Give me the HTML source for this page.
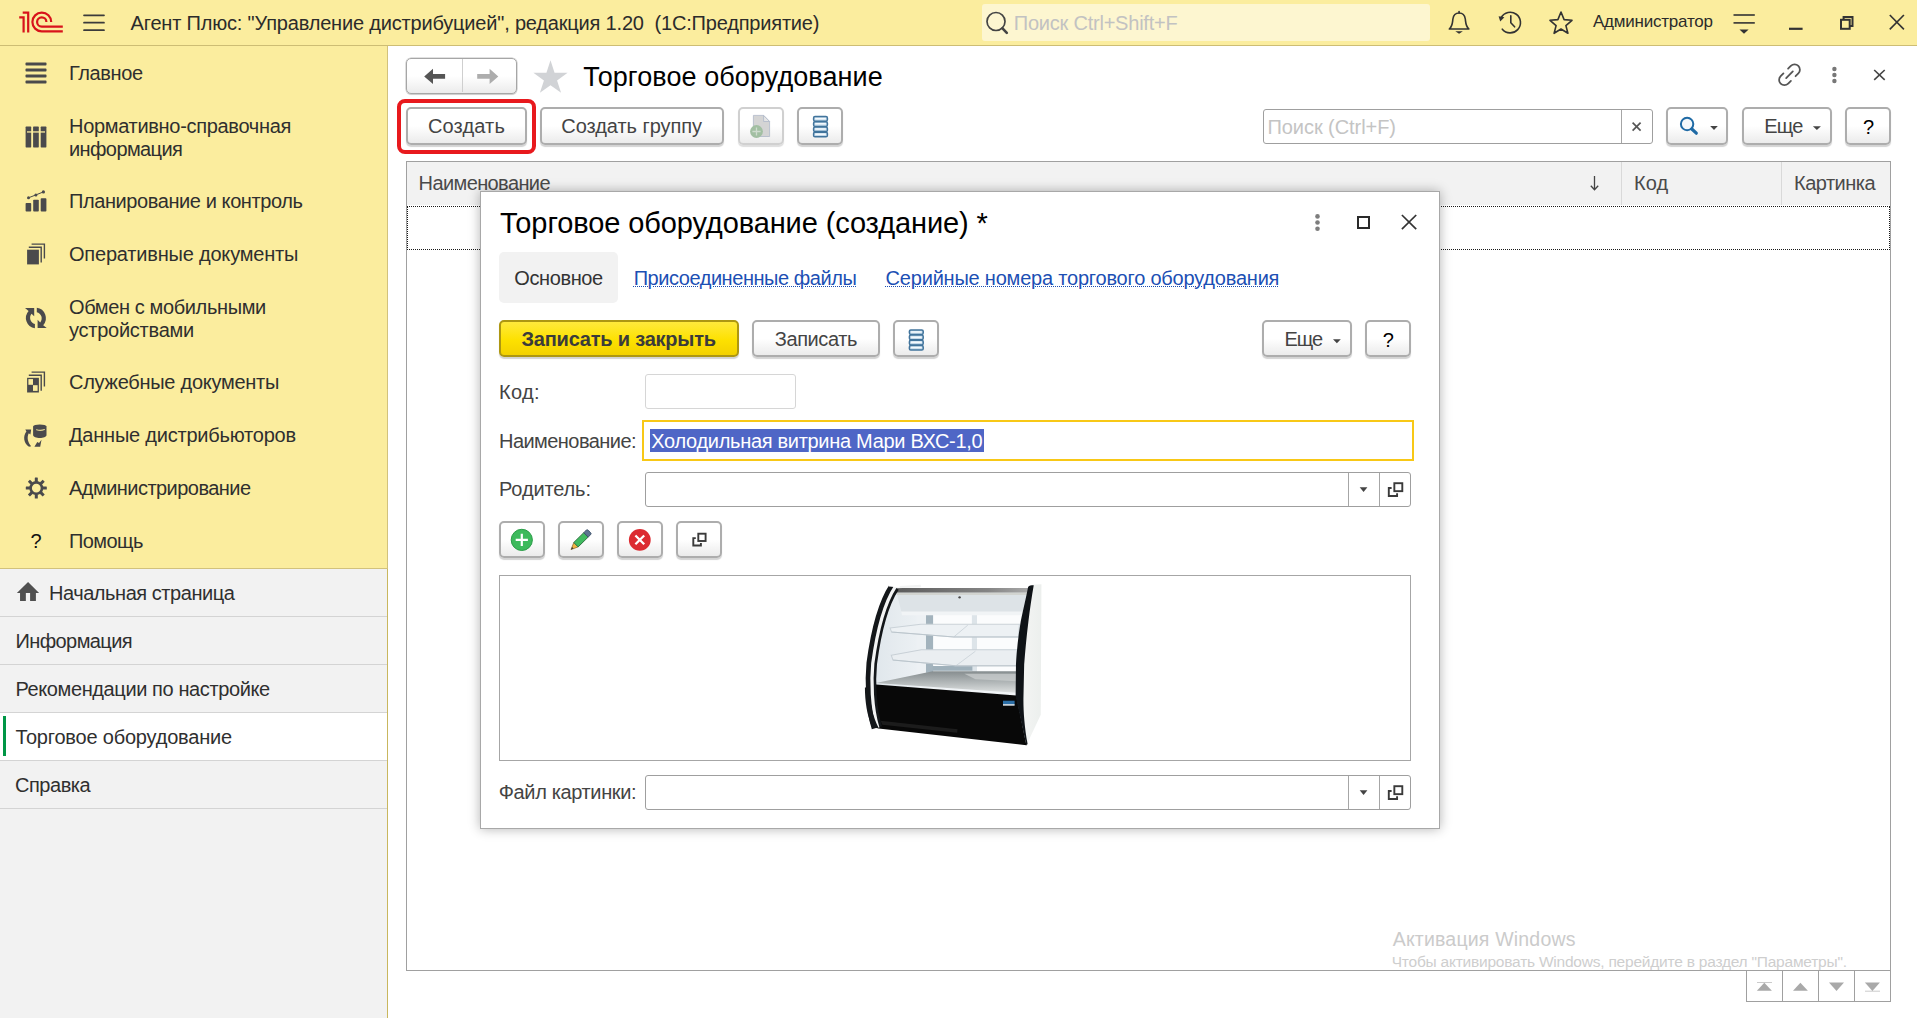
<!DOCTYPE html>
<html lang="ru">
<head>
<meta charset="utf-8">
<title>Торговое оборудование</title>
<style>
*{box-sizing:border-box;margin:0;padding:0}
html,body{width:1917px;height:1018px;overflow:hidden;background:#fff;font-family:"Liberation Sans",sans-serif;color:#333}
.abs{position:absolute}
svg{position:absolute;overflow:visible}
.t{position:absolute;white-space:pre;line-height:1}
.lnk{text-decoration:underline dotted;text-underline-offset:1px;text-decoration-thickness:1px}
.btn{position:absolute;border:2px solid #adadad;border-radius:5px;background:linear-gradient(#fff,#fff 50%,#ebebeb);box-shadow:0 2px 1px 0 #d3d3d3}
.btn.dis{border-color:#d0d0d0;box-shadow:0 2px 1px 0 #dedede}
.inp{position:absolute;border:1px solid #9f9f9f;border-radius:3px;background:#fff}
.vl{position:absolute;width:1px;background:#a6a6a6}
.oi{position:absolute;left:0;width:387px;height:48px;border-bottom:1px solid #d4d4d4}
</style>
</head>
<body>

<div class="abs" style="left:0;top:0;width:1917px;height:45px;background:#fbed9e"></div>
<div class="abs" style="left:0;top:45px;width:1917px;height:1px;background:#cdbd74"></div>
<svg style="left:0;top:0" width="120" height="46" viewBox="0 0 120 46">
 <g fill="none" stroke="#d8131b" stroke-width="2.2">
  <path d="M19.2 17.3 H23.6 V32.5"/>
  <path d="M22.7 12.6 H28.2 V32.5"/>
  <path d="M51.2 21.9 A9.4 9.4 0 1 0 41.75 31.4 H62.8"/>
  <path d="M46.4 21.9 A4.65 4.65 0 1 0 41.75 26.65 H62.8"/>
 </g>
 <g stroke="#3b3b3b" stroke-width="1.7" stroke-linecap="round">
  <path d="M84 15.3 H104"/><path d="M84 22.7 H104"/><path d="M84 30.2 H104"/>
 </g>
</svg>
<div class="abs" style="left:982px;top:4px;width:448px;height:37px;background:#fdf6d0;border-radius:3px"></div>
<svg style="left:980px;top:0" width="40" height="46" viewBox="980 0 40 46">
 <circle cx="996" cy="21.5" r="9" fill="none" stroke="#444" stroke-width="1.7"/>
 <path d="M1002.5 28.3 L1006.8 32.8" stroke="#444" stroke-width="2.6" stroke-linecap="round"/>
</svg>
<svg style="left:1440px;top:0" width="477" height="46" viewBox="1440 0 477 46">
 <g fill="none" stroke="#333" stroke-width="1.6" stroke-linejoin="round" stroke-linecap="round">
  <!-- bell -->
  <path d="M1449.3 29 H1468.9 C1465.5 26 1465.8 22.5 1465.3 19 C1464.8 15.3 1462.5 13 1459.1 13 C1455.7 13 1453.4 15.3 1452.9 19 C1452.4 22.5 1452.7 26 1449.3 29 Z"/>
  <path d="M1459.1 13 V11.6"/>
  <!-- history -->
  <path d="M1501.2 17.5 A10.3 10.3 0 1 1 1502.3 29.2"/>
  <path d="M1510.8 15.8 V22.8 L1514.6 26.8"/>
  <!-- star -->
  <path d="M1561 12 L1564.1 19.6 L1572 20.3 L1565.9 25.6 L1567.9 33.3 L1561 29 L1554.1 33.3 L1556.1 25.6 L1550 20.3 L1557.9 19.6 Z"/>
 </g>
 <path d="M1455.3 31.3 H1462.9 L1459.1 33.8 Z" fill="#333"/>
 <path d="M1498.6 16.2 L1504.4 17.2 L1500.2 21.6 Z" fill="#333"/>
 <g stroke="#333" stroke-width="1.6"><path d="M1733.5 15 H1754.8"/><path d="M1733.5 22.9 H1754.8"/></g>
 <path d="M1739.5 29.4 H1748.6 L1744 33.8 Z" fill="#333"/>
 <path d="M1789 28.8 H1802.6" stroke="#333" stroke-width="2.2"/>
 <g fill="none" stroke="#333" stroke-width="2">
  <rect x="1841" y="19.8" width="8.7" height="9"/>
  <path d="M1843.6 19.8 V17 H1852.5 V26 H1849.7"/>
 </g>
 <g stroke="#333" stroke-width="1.6"><path d="M1889.8 15 L1903.9 29.4"/><path d="M1903.9 15 L1889.8 29.4"/></g>
</svg>

<div class="abs" style="left:0;top:46px;width:387px;height:972px;background:#fbed9e"></div>
<div class="abs" style="left:387px;top:46px;width:1px;height:972px;background:#d2c27c"></div>
<div class="abs" style="left:0;top:568px;width:387px;height:450px;background:#f2f2f2"></div>
<div class="abs" style="left:0;top:568px;width:387px;height:1px;background:#d2c27c"></div>
<div class="abs" style="left:387px;top:569px;width:1px;height:449px;background:#c9b75e"></div>
<div class="oi" style="top:569px"></div>
<div class="oi" style="top:617px"></div>
<div class="oi" style="top:665px"></div>
<div class="oi" style="top:713px;background:#fff"></div>
<div class="abs" style="left:3px;top:716px;width:3px;height:40px;background:#009646"></div>
<div class="oi" style="top:761px"></div>
<svg style="left:0;top:46px" width="386" height="972" viewBox="0 46 386 972">
 <g fill="#4a4a4c">
  <!-- menu -->
  <rect x="25.5" y="62.6" width="21" height="2.9" rx=".8"/><rect x="25.5" y="68.6" width="21" height="2.9" rx=".8"/><rect x="25.5" y="74.6" width="21" height="2.9" rx=".8"/><rect x="25.5" y="80.6" width="21" height="2.9" rx=".8"/>
  <!-- books -->
  <rect x="25.6" y="126.6" width="5.6" height="20.8" rx=".6"/><rect x="33.1" y="126.6" width="5.7" height="20.8" rx=".6"/><rect x="40.7" y="126.6" width="5.7" height="20.8" rx=".6"/>
  <rect x="27" y="131.3" width="18" height="1.3" fill="#fbed9e"/>
  <!-- chart -->
  <rect x="25.6" y="203" width="5.6" height="8.5" rx=".8"/><rect x="33.2" y="199.8" width="5.6" height="11.7" rx=".8"/><rect x="40.7" y="198.3" width="5.7" height="13.2" rx=".8"/>
  <circle cx="28.5" cy="197.8" r="1.5"/><circle cx="35.9" cy="194.9" r="1.5"/><circle cx="43.4" cy="191.9" r="1.6"/>
  <path d="M28.5 197.8 L35.9 194.9 L43.4 191.9" stroke="#4a4a4c" stroke-width="1" fill="none"/>
  <!-- docs -->
  <rect x="27.1" y="249.7" width="11.8" height="14.7"/>
  <path d="M28.8 247.2 H41.2 V262.6 M31.6 244.1 H44.4 V258.4" fill="none" stroke="#4a4a4c" stroke-width="1.4"/>
  <!-- exchange -->
  <path d="M25 308 H34.2 V316.3 L31.6 313.7 A6.3 6.3 0 0 0 34.9 323.9 V328.3 A10.5 10.5 0 0 1 28.6 310.9 Z"/>
  <path d="M46.7 328.1 H37.6 V319.8 L40.2 322.4 A6.3 6.3 0 0 0 36.8 312.2 V307.8 A10.5 10.5 0 0 1 43.2 325.2 Z"/>
  <!-- service docs -->
  <rect x="27.1" y="377.8" width="11.8" height="14.7"/>
  <rect x="28.4" y="379.1" width="4.6" height="5.7" fill="#fbed9e"/><rect x="33" y="385.2" width="4.6" height="5.7" fill="#fbed9e"/>
  <path d="M28.8 375.3 H41.2 V390.8 M31.6 372.1 H44.4 V386.4" fill="none" stroke="#4a4a4c" stroke-width="1.4"/>
  <!-- distributors -->
  <ellipse cx="39.8" cy="426.6" rx="6.7" ry="2.1"/>
  <path d="M33.1 426.6 H46.5 V435 C46.5 438.9 33.1 438.9 33.1 435 Z"/>
  <path d="M36.6 429.7 C39 430.5 42 430.5 44.4 429.5" fill="none" stroke="#fbed9e" stroke-width="1.1" stroke-linecap="round" opacity=".85"/>
  <path d="M25.3 429.6 L31.2 429.4 L30.4 434.6 L28.8 433.3 C26.6 437.5 27.8 442.6 31.2 446.2 L29 446.8 C23.4 442.6 22.9 436.2 26.4 431.4 Z"/>
  <path d="M34.4 446.8 L37.3 441.9 L39 442.9 L41.5 439.7 L40.2 446.8 Z"/>
  <!-- gear -->
  <path fill-rule="evenodd" d="M36.3 481.1 A7 7 0 1 0 36.3 495.1 A7 7 0 1 0 36.3 481.1 Z M36.3 483.7 A4.4 4.4 0 1 1 36.3 492.5 A4.4 4.4 0 1 1 36.3 483.7 Z"/>
  <g id="teeth"><rect x="34.8" y="477.6" width="3" height="4.5" rx=".4"/><rect x="34.8" y="494.1" width="3" height="4.5" rx=".4"/><rect x="25.8" y="486.6" width="4.5" height="3" rx=".4"/><rect x="42.3" y="486.6" width="4.5" height="3" rx=".4"/></g>
  <g transform="rotate(45 36.3 488.1)"><rect x="34.8" y="477.6" width="3" height="4.5" rx=".4"/><rect x="34.8" y="494.1" width="3" height="4.5" rx=".4"/><rect x="25.8" y="486.6" width="4.5" height="3" rx=".4"/><rect x="42.3" y="486.6" width="4.5" height="3" rx=".4"/></g>
 </g>
 <!-- home -->
 <path d="M28.05 581.9 L39.1 592.9 H35.9 V600.9 H30.1 V592.9 H25.85 V600.9 H20.05 V592.9 H16.9 Z" fill="#505050"/>
</svg>

<!-- nav buttons -->
<div class="btn" style="left:406px;top:58px;width:111px;height:36px;border:1px solid #a6a6a6;box-shadow:0 0 0 .5px #c4c4c4,0 1px 1px 0 #d6d6d6"></div>
<div class="abs" style="left:462px;top:59px;width:1px;height:33px;background:#cfcfcf"></div>
<svg style="left:0;top:0" width="1917" height="160" viewBox="0 0 1917 160">
 <path d="M424.2 76.4 L433 68.7 V74.1 H445.1 V78.8 H433 V84.1 Z" fill="#555"/>
 <path d="M498.3 76.4 L489.6 68.7 V74.1 H477.2 V78.8 H489.6 V84.1 Z" fill="#adadad"/>
 <path d="M550.50 60.30 L554.56 72.72 L567.62 72.74 L557.06 80.43 L561.08 92.86 L550.50 85.20 L539.92 92.86 L543.94 80.43 L533.38 72.74 L546.44 72.72 Z" fill="#d1d3d6"/>
 <!-- link icon -->
 <g fill="none" stroke="#555" stroke-width="1.8" stroke-linecap="round" transform="translate(1789.5 74.8) rotate(-45)">
  <path d="M3.3 -5.3 H7.2 A5.3 5.3 0 0 1 7.2 5.3 H3.3"/>
  <path d="M-3.3 -5.3 H-7.2 A5.3 5.3 0 0 0 -7.2 5.3 H-3.3"/>
  <path d="M-4.7 0 H4.7"/>
 </g>
 <g fill="#777"><circle cx="1834.4" cy="69" r="2.2"/><circle cx="1834.4" cy="75" r="2.2"/><circle cx="1834.4" cy="81" r="2.2"/></g>
 <g stroke="#444" stroke-width="1.6"><path d="M1874.2 70 L1884.7 79.9"/><path d="M1884.7 70 L1874.2 79.9"/></g>
</svg>

<!-- toolbar -->
<div class="abs" style="left:397px;top:99px;width:139px;height:55px;border:4px solid #e8191d;border-radius:8px"></div>
<div class="btn" style="left:406px;top:107px;width:121px;height:38px"></div>
<div class="btn" style="left:540px;top:107px;width:184px;height:38px"></div>
<div class="btn dis" style="left:738px;top:107px;width:46px;height:38px"></div>
<div class="btn" style="left:797px;top:107px;width:46px;height:38px"></div>
<div class="inp" style="left:1263px;top:109px;width:390px;height:35px"></div>
<div class="vl" style="left:1621px;top:110px;height:33px"></div>
<div class="btn" style="left:1666px;top:107px;width:62px;height:38px"></div>
<div class="btn" style="left:1742px;top:107px;width:90px;height:38px"></div>
<div class="btn" style="left:1845px;top:107px;width:46px;height:38px"></div>
<svg style="left:0;top:100px" width="1917" height="50" viewBox="0 100 1917 50">
 <!-- doc+ icon (disabled) -->
 <path d="M753.4 115.4 H763.6 L769.6 121.5 V136.5 H753.4 Z" fill="#d4d4d4" stroke="#aeb7c8" stroke-width=".8"/>
 <path d="M763.6 115.4 V121.5 H769.6 Z" fill="#e6e6e6" stroke="#aeb7c8" stroke-width=".8"/>
 <circle cx="756.5" cy="131.5" r="6.4" fill="#a2bfa2"/>
 <path d="M752.4 131.5 H760.6 M756.5 127.4 V135.6" stroke="#cfdccf" stroke-width="1.3"/>
 <rect x="813.6" y="116.6" width="13.8" height="4.6" rx="1.4" fill="#c3d8e9" stroke="#41749c" stroke-width="1.5"/><rect x="815.0" y="117.9" width="11" height="1.5" rx=".7" fill="#f4f9fd"/><rect x="813.6" y="121.8" width="13.8" height="4.6" rx="1.4" fill="#c3d8e9" stroke="#41749c" stroke-width="1.5"/><rect x="815.0" y="123.1" width="11" height="1.5" rx=".7" fill="#f4f9fd"/><rect x="813.6" y="127.0" width="13.8" height="4.6" rx="1.4" fill="#c3d8e9" stroke="#41749c" stroke-width="1.5"/><rect x="815.0" y="128.3" width="11" height="1.5" rx=".7" fill="#f4f9fd"/><rect x="813.6" y="132.2" width="13.8" height="4.6" rx="1.4" fill="#c3d8e9" stroke="#41749c" stroke-width="1.5"/><rect x="815.0" y="133.5" width="11" height="1.5" rx=".7" fill="#f4f9fd"/>
 <g stroke="#555" stroke-width="1.7"><path d="M1632.6 122.6 L1640.6 130.6"/><path d="M1640.6 122.6 L1632.6 130.6"/></g>
 <circle cx="1687.1" cy="124" r="6.2" fill="#f4f8fb" stroke="#1f6aa5" stroke-width="2"/>
 <path d="M1691.8 129 L1696.3 133.2" stroke="#1f6aa5" stroke-width="3.2" stroke-linecap="round"/>
 <path d="M1710.2 126 H1717.8 L1714 130 Z" fill="#444"/>
 <path d="M1812.9 126.2 H1820.9 L1816.9 130.1 Z" fill="#444"/>
</svg>

<!-- table -->
<div class="abs" style="left:406px;top:161px;width:1485px;height:810px;border:1px solid #a0a0a0;background:#fff"></div>
<div class="abs" style="left:407px;top:162px;width:1483px;height:43px;background:#f2f2f2"></div>
<div class="abs" style="left:1621px;top:162px;width:1px;height:43px;background:#d9d9d9"></div>
<div class="abs" style="left:1781px;top:162px;width:1px;height:43px;background:#d9d9d9"></div>
<svg style="left:1585px;top:170px" width="20" height="26" viewBox="1585 170 20 26"><path d="M1594.5 176 V189.5 M1590.8 185.8 L1594.5 189.8 L1598.2 185.8" fill="none" stroke="#444" stroke-width="1.3"/></svg>
<div class="abs" style="left:407px;top:206px;width:1483px;height:44px;border:1px dotted #1a1a1a"></div>

<!-- scroll buttons -->
<div class="abs" style="left:1746px;top:970px;width:145px;height:32px;border:1px solid #a0a0a0;background:#fff"></div>
<div class="vl" style="left:1782px;top:971px;height:30px;background:#a0a0a0"></div>
<div class="vl" style="left:1818px;top:971px;height:30px;background:#a0a0a0"></div>
<div class="vl" style="left:1854px;top:971px;height:30px;background:#a0a0a0"></div>
<svg style="left:1746px;top:969px" width="145" height="33" viewBox="1746 969 145 33">
 <g fill="#a9a9a9">
  <path d="M1757 982 H1772 V983 H1757 Z" opacity=".6"/><path d="M1756.9 990.8 L1764.3 982.8 L1771.9 990.8 Z"/>
  <path d="M1793 990.8 L1800.4 982.8 L1807.9 990.8 Z"/>
  <path d="M1829 982.6 H1844 L1836.500 990.9 Z"/>
  <path d="M1864.900 982.600 H1879.900 L1872.400 990.900 Z"/><path d="M1865 990.700 H1880 V991.700 H1865 Z" opacity=".6"/>
 </g>
</svg>
<div class="t" style="left:130.60px;top:13.00px;font-size:20px;color:#2b2b2b;letter-spacing:-0.185px">Агент Плюс: "Управление дистрибуцией", редакция 1.20  (1С:Предприятие)</div>
<div class="t" style="left:1013.75px;top:13.00px;font-size:20px;color:#c2c2c2;letter-spacing:-0.218px">Поиск Ctrl+Shift+F</div>
<div class="t" style="left:1592.90px;top:13.30px;font-size:17px;color:#2b2b2b;letter-spacing:-0.216px">Администратор</div>
<div class="t" style="left:69.00px;top:63.00px;font-size:20px;color:#2f2f2f;letter-spacing:-0.382px">Главное</div>
<div class="t" style="left:69.00px;top:116.00px;font-size:20px;color:#2f2f2f;letter-spacing:-0.308px">Нормативно-справочная</div>
<div class="t" style="left:69.00px;top:139.00px;font-size:20px;color:#2f2f2f;letter-spacing:-0.602px">информация</div>
<div class="t" style="left:69.00px;top:191.00px;font-size:20px;color:#2f2f2f;letter-spacing:-0.412px">Планирование и контроль</div>
<div class="t" style="left:69.00px;top:244.00px;font-size:20px;color:#2f2f2f;letter-spacing:-0.200px">Оперативные документы</div>
<div class="t" style="left:69.00px;top:297.00px;font-size:20px;color:#2f2f2f;letter-spacing:-0.374px">Обмен с мобильными</div>
<div class="t" style="left:69.00px;top:320.00px;font-size:20px;color:#2f2f2f;letter-spacing:-0.253px">устройствами</div>
<div class="t" style="left:69.00px;top:372.00px;font-size:20px;color:#2f2f2f;letter-spacing:-0.266px">Служебные документы</div>
<div class="t" style="left:69.00px;top:425.00px;font-size:20px;color:#2f2f2f;letter-spacing:-0.217px">Данные дистрибьюторов</div>
<div class="t" style="left:69.00px;top:478.00px;font-size:20px;color:#2f2f2f;letter-spacing:-0.537px">Администрирование</div>
<div class="t" style="left:69.00px;top:531.00px;font-size:20px;color:#2f2f2f;letter-spacing:-0.565px">Помощь</div>
<div class="t" style="left:30.50px;top:531.00px;font-size:20px;color:#111;letter-spacing:0.000px">?</div>
<div class="t" style="left:49.00px;top:583.00px;font-size:20px;color:#2f2f2f;letter-spacing:-0.450px">Начальная страница</div>
<div class="t" style="left:15.50px;top:631.00px;font-size:20px;color:#2f2f2f;letter-spacing:-0.597px">Информация</div>
<div class="t" style="left:15.50px;top:679.00px;font-size:20px;color:#2f2f2f;letter-spacing:-0.395px">Рекомендации по настройке</div>
<div class="t" style="left:15.50px;top:727.00px;font-size:20px;color:#2f2f2f;letter-spacing:-0.203px">Торговое оборудование</div>
<div class="t" style="left:15.00px;top:775.00px;font-size:20px;color:#2f2f2f;letter-spacing:-0.472px">Справка</div>
<div class="t" style="left:583.20px;top:63.70px;font-size:27px;color:#000;letter-spacing:0.083px">Торговое оборудование</div>
<div class="t" style="left:427.90px;top:115.50px;font-size:20px;color:#444;letter-spacing:0.152px">Создать</div>
<div class="t" style="left:561.25px;top:115.50px;font-size:20px;color:#444;letter-spacing:-0.051px">Создать группу</div>
<div class="t" style="left:1267.50px;top:117.00px;font-size:20px;color:#c4c4c4;letter-spacing:-0.064px">Поиск (Ctrl+F)</div>
<div class="t" style="left:1764.30px;top:115.60px;font-size:20px;color:#444;letter-spacing:-0.835px">Еще</div>
<div class="t" style="left:1862.90px;top:116.70px;font-size:20px;color:#000;letter-spacing:0.000px">?</div>
<div class="t" style="left:418.60px;top:172.60px;font-size:20px;color:#4a4a4a;letter-spacing:-0.611px">Наименование</div>
<div class="t" style="left:1634.00px;top:172.70px;font-size:20px;color:#4a4a4a;letter-spacing:0.033px">Код</div>
<div class="t" style="left:1794.00px;top:172.70px;font-size:20px;color:#4a4a4a;letter-spacing:-0.518px">Картинка</div>
<div class="t" style="left:1392.70px;top:930.45px;font-size:19.5px;color:#cbcbcb;letter-spacing:0.190px">Активация Windows</div>
<div class="t" style="left:1391.70px;top:954.05px;font-size:15.5px;color:#cecece;letter-spacing:-0.223px">Чтобы активировать Windows, перейдите в раздел "Параметры".</div>
<!-- DIALOG -->
<div class="abs" style="left:480px;top:191px;width:960px;height:638px;background:#fff;border:1px solid #a8a8a8;box-shadow:0 0 11px 0 rgba(0,0,0,.30)"></div>
<div class="abs" style="left:499px;top:252px;width:119px;height:51px;background:#f2f2f2;border-radius:5px"></div>
<div class="btn" style="left:499px;top:320px;width:240px;height:37px;background:linear-gradient(#ffe93c,#fde100 55%,#f3d100);border-color:#ad9712"></div>
<div class="btn" style="left:752px;top:320px;width:128px;height:37px"></div>
<div class="btn" style="left:893px;top:320px;width:46px;height:37px"></div>
<div class="btn" style="left:1262px;top:320px;width:90px;height:37px"></div>
<div class="btn" style="left:1365px;top:320px;width:46px;height:37px"></div>
<div class="inp" style="left:645px;top:374px;width:151px;height:35px;border-color:#d6d6d6"></div>
<div class="abs" style="left:642px;top:420px;width:772px;height:41px;border:2px solid #f8c816;background:#fff"></div>
<div class="abs" style="left:650px;top:429px;width:334px;height:23px;background:#4f66c6"></div>
<div class="inp" style="left:645px;top:472px;width:766px;height:35px"></div>
<div class="vl" style="left:1348px;top:473px;height:33px"></div>
<div class="vl" style="left:1379px;top:473px;height:33px"></div>
<div class="btn" style="left:499px;top:521px;width:46px;height:37px"></div>
<div class="btn" style="left:558px;top:521px;width:46px;height:37px"></div>
<div class="btn" style="left:617px;top:521px;width:46px;height:37px"></div>
<div class="btn" style="left:676px;top:521px;width:46px;height:37px"></div>
<div class="abs" style="left:499px;top:575px;width:912px;height:186px;border:1px solid #a6a6a6;background:#fff"></div>
<div class="inp" style="left:645px;top:775px;width:766px;height:35px"></div>
<div class="vl" style="left:1348px;top:776px;height:33px"></div>
<div class="vl" style="left:1379px;top:776px;height:33px"></div>
<div class="t" style="left:500.00px;top:209.20px;font-size:29px;color:#000;letter-spacing:-0.109px">Торговое оборудование (создание) *</div>
<div class="t" style="left:514.30px;top:267.50px;font-size:20px;color:#333;letter-spacing:-0.403px">Основное</div>
<div class="t lnk" style="left:633.70px;top:267.50px;font-size:20px;color:#1c4fb4;letter-spacing:-0.451px">Присоединенные файлы</div>
<div class="t lnk" style="left:885.60px;top:267.50px;font-size:20px;color:#1c4fb4;letter-spacing:-0.207px">Серийные номера торгового оборудования</div>
<div class="t" style="left:521.50px;top:328.70px;font-size:20px;color:#3b3b3b;letter-spacing:-0.213px;font-weight:700">Записать и закрыть</div>
<div class="t" style="left:774.75px;top:328.60px;font-size:20px;color:#444;letter-spacing:-0.414px">Записать</div>
<div class="t" style="left:1284.50px;top:328.90px;font-size:20px;color:#444;letter-spacing:-1.035px">Еще</div>
<div class="t" style="left:1382.70px;top:329.70px;font-size:20px;color:#000;letter-spacing:0.000px">?</div>
<div class="t" style="left:499.00px;top:381.80px;font-size:20px;color:#444;letter-spacing:0.365px">Код:</div>
<div class="t" style="left:499.00px;top:430.60px;font-size:20px;color:#444;letter-spacing:-0.554px">Наименование:</div>
<div class="t" style="left:651.25px;top:430.60px;font-size:20px;color:#fff;letter-spacing:-0.302px">Холодильная витрина Мари ВХС-1,0</div>
<div class="t" style="left:499.00px;top:479.40px;font-size:20px;color:#444;letter-spacing:-0.134px">Родитель:</div>
<div class="t" style="left:498.75px;top:782.40px;font-size:20px;color:#444;letter-spacing:-0.367px">Файл картинки:</div>
<svg style="left:480px;top:191px" width="960" height="638" viewBox="480 191 960 638">
 <!-- header icons -->
 <g fill="#7d7d7d"><circle cx="1317.500" cy="216.400" r="2.300"/><circle cx="1317.500" cy="222.500" r="2.300"/><circle cx="1317.500" cy="228.700" r="2.300"/></g>
 <rect x="1358" y="217" width="11" height="11" fill="none" stroke="#2a2a2a" stroke-width="2"/>
 <g stroke="#333" stroke-width="1.700"><path d="M1401.900 215 L1416.200 229.200"/><path d="M1416.200 215 L1401.900 229.200"/></g>
 <rect x="909.4" y="329.9" width="13.8" height="4.6" rx="1.4" fill="#c3d8e9" stroke="#41749c" stroke-width="1.5"/><rect x="910.8" y="331.2" width="11" height="1.5" rx=".7" fill="#f4f9fd"/><rect x="909.4" y="335.1" width="13.8" height="4.6" rx="1.4" fill="#c3d8e9" stroke="#41749c" stroke-width="1.5"/><rect x="910.8" y="336.4" width="11" height="1.5" rx=".7" fill="#f4f9fd"/><rect x="909.4" y="340.3" width="13.8" height="4.6" rx="1.4" fill="#c3d8e9" stroke="#41749c" stroke-width="1.5"/><rect x="910.8" y="341.6" width="11" height="1.5" rx=".7" fill="#f4f9fd"/><rect x="909.4" y="345.5" width="13.8" height="4.6" rx="1.4" fill="#c3d8e9" stroke="#41749c" stroke-width="1.5"/><rect x="910.8" y="346.8" width="11" height="1.5" rx=".7" fill="#f4f9fd"/>
 <path d="M1333 339.300 H1340.800 L1336.900 343.200 Z" fill="#444"/>
 <!-- dropdown/open icons -->
 <path d="M1359.700 487.200 H1367.400 L1363.550 492.100 Z" fill="#444"/>
 <g fill="none" stroke="#3a3a3a" stroke-width="1.9"><rect x="1394.34" y="483.20" width="7.96" height="7.96"/><path d="M1391.62 488.00 H1388.80 V496.06 H1397.08 V493.34"/></g>
 <path d="M1359.700 790.200 H1367.400 L1363.550 795.100 Z" fill="#444"/>
 <g fill="none" stroke="#3a3a3a" stroke-width="1.9"><rect x="1394.34" y="786.20" width="7.96" height="7.96"/><path d="M1391.62 791.00 H1388.80 V799.06 H1397.08 V796.34"/></g>
 <!-- add -->
 <circle cx="521.800" cy="539.900" r="10.600" fill="#3dba5c" stroke="#2b9d48" stroke-width="1"/>
 <path d="M515.700 539.900 H527.900 M521.800 533.800 V546" stroke="#fff" stroke-width="2.200"/>
 <!-- pencil -->
 <g transform="translate(571 549.600) rotate(-44.500)">
  <path d="M0 0 L7 -3.100 V3.100 Z" fill="#f2b544" stroke="#7a5a1e" stroke-width=".6"/>
  <path d="M0 0 L2.600 -1.150 V1.150 Z" fill="#3a3a3a"/>
  <rect x="7" y="-3.100" width="14" height="6.200" fill="#40bb60" stroke="#2c6e3e" stroke-width=".9"/>
  <path d="M21 -3.100 H24.500 Q25.800 -3.100 25.800 -1.800 V1.800 Q25.800 3.100 24.500 3.100 H21 Z" fill="#5d7592" stroke="#3d5068" stroke-width=".9"/>
 </g>
 <!-- delete -->
 <circle cx="639.800" cy="539.900" r="10.900" fill="#dc2b31"/>
 <path d="M635.400 535.500 L644.200 544.300 M644.200 535.500 L635.400 544.300" stroke="#fff" stroke-width="2.300"/>
 <g fill="none" stroke="#3a3a3a" stroke-width="1.9"><rect x="698.30" y="533.70" width="7.30" height="7.30"/><path d="M695.80 538.10 H693.30 V545.50 H700.90 V543.00"/></g>
</svg>

<svg style="left:855px;top:578px" width="196" height="174" viewBox="0 0 1147 1018">
 <defs>
  <linearGradient id="gl" x1="0" y1="0" x2="1" y2="0"><stop offset="0" stop-color="#dfe6eb"/><stop offset=".35" stop-color="#eef2f5"/><stop offset="1" stop-color="#f2f5f7"/></linearGradient>
  <linearGradient id="fl" x1="0" y1="0" x2="0" y2="1"><stop offset="0" stop-color="#868d8f"/><stop offset=".6" stop-color="#b9bebf"/><stop offset="1" stop-color="#dde0e0"/></linearGradient>
  <linearGradient id="tp" x1="0" y1="0" x2="1" y2="0"><stop offset="0" stop-color="#5b5b5b"/><stop offset=".7" stop-color="#858585"/><stop offset="1" stop-color="#a9a9a9"/></linearGradient>
  <linearGradient id="sd" x1="0" y1="0" x2="1" y2="0"><stop offset="0" stop-color="#f4f5f4"/><stop offset="1" stop-color="#ecefed"/></linearGradient>
 </defs>
 <!-- right side panel -->
 <path d="M1035 40 L1091 36 L1087 800 L1003 978 L975 690 L985 420 Z" fill="url(#sd)"/>
 <!-- interior -->
 <path d="M238 62 H1016 C980 250 955 420 945 690 L92 628 C100 400 150 200 238 62 Z" fill="url(#gl)"/>
 <!-- back wall -->
 <path d="M455 215 H972 L950 548 H455 Z" fill="#fbfcfd"/>
 <!-- posts -->
 <rect x="415" y="215" width="42" height="340" fill="#a3b3bd"/>
 <rect x="360" y="215" width="55" height="340" fill="#edf1f4"/>
 <rect x="684" y="215" width="30" height="340" fill="#dde4e9"/>
 <rect x="455" y="515" width="232" height="28" fill="#9fb0ba"/>
 <!-- top lamp housing -->
 <path d="M243 84 H1008 L982 200 H272 Z" fill="#dde3e7"/>
 <path d="M243 84 H1008 L1004 100 H246 Z" fill="#d2d4d0"/>
 <path d="M270 196 H984 L980 218 H276 Z" fill="#f1f4f6"/>
 <!-- floor -->
 <path d="M122 614 L455 546 H950 L942 672 Z" fill="url(#fl)"/>
 <path d="M640 560 L705 592 L944 604 L947 560 Z" fill="#c9cdce" opacity=".75"/>
 <!-- shelves -->
 <path d="M205 292 L385 270 H962 L957 345 H578 L214 316 Z" fill="#edf1f4" stroke="#cad2d8" stroke-width="6"/>
 <path d="M212 452 L388 420 H950 L945 514 H590 L222 480 Z" fill="#eaeef1" stroke="#c8d0d6" stroke-width="6"/>
 <path d="M578 345 L660 276 M590 514 L705 428" stroke="#cad2d8" stroke-width="5"/>
 <path d="M214 316 L578 345 H957 M222 480 L590 514 H945" stroke="#b9c3ca" stroke-width="5" fill="none"/>
 <!-- top bar -->
 <path d="M240 58 H1018 L1010 84 H228 Z" fill="url(#tp)"/>
 <circle cx="612" cy="113" r="7" fill="#4a4a4a"/>
 <!-- black base -->
 <path d="M86 620 L944 688 L1003 978 L138 880 C95 800 82 720 86 620 Z" fill="#080808"/>
 <path d="M150 835 L600 885 L598 906 L160 858 Z" fill="#1c1c1c"/>
 <rect x="866" y="718" width="68" height="22" fill="#2b6ea6"/><rect x="866" y="738" width="68" height="9" fill="#dfe7ee"/>
 <!-- left frame: black + white stripe + dark -->
 <path d="M214 50 L384 40 L388 54 L244 60 Z" fill="#f2f3f3"/>
 <path d="M230 52 C168 145 122 320 98 500 C88 600 92 760 128 876" fill="none" stroke="#14171a" stroke-width="62"/>
 <path d="M236 50 C174 145 128 320 104 500 C94 600 98 760 134 878" fill="none" stroke="#f3f4f4" stroke-width="19"/>
 <path d="M86 640 C88 740 104 810 140 880 L100 874 C70 800 58 720 58 640 Z" fill="#14171a"/>
 <path d="M198 20 L262 20 L262 56 L198 50 Z" fill="#fff"/>
 <!-- right frame -->
 <path d="M1013 52 C1000 120 985 180 970 253 C955 340 946 430 942 506 L940 690 L1003 980 L1010 972 C990 860 984 760 986 690 L990 506 C996 430 1004 340 1015 253 C1024 180 1034 110 1046 42 C1030 42 1020 44 1013 52 Z" fill="#0f1317"/>
</svg>

</body>
</html>
